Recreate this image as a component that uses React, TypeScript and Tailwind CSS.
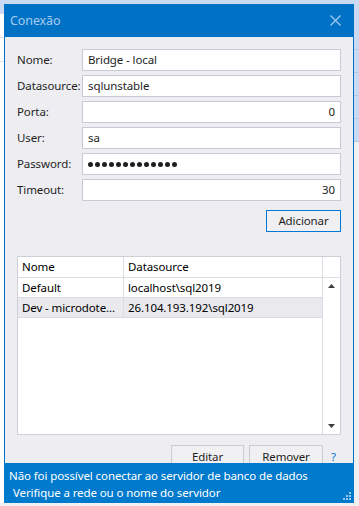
import React from "react";

const fields = [
  { label: "Nome:", value: "Bridge - local" },
  { label: "Datasource:", value: "sqlunstable" },
  { label: "Porta:", value: "0", right: true },
  { label: "User:", value: "sa" },
  { label: "Password:", value: "", password: true },
  { label: "Timeout:", value: "30", right: true },
];

const rows = [
  { nome: "Default", ds: "localhost\\sql2019" },
  { nome: "Dev - microdote...", ds: "26.104.193.192\\sql2019", alt: true },
];

function Field({ label, value, right, password }: { label: string; value: string; right?: boolean; password?: boolean }) {
  return (
    <div className="flex items-center h-[22px] shrink-0">
      <div className="w-[65px] whitespace-nowrap text-[#1e1e1e]">{label}</div>
      <div
        className={`w-[259px] h-[22px] border border-[#cacad6] bg-white flex items-center px-[5px] ${right ? "justify-end" : ""}`}
      >
        {password ? (
          <div className="flex gap-[2px]">
            {Array.from({ length: 13 }).map((_, i) => (
              <span key={i} className="w-[5px] h-[5px] rounded-full bg-[#1e1e1e]" />
            ))}
          </div>
        ) : (
          <span className="text-[#1e1e1e]">{value}</span>
        )}
      </div>
    </div>
  );
}

function Triangle({ up }: { up?: boolean }) {
  return (
    <svg width="7" height="4" viewBox="0 0 7 4">
      <path d={up ? "M0 4 L3.5 0 L7 4 Z" : "M0 0 L3.5 4 L7 0 Z"} fill="#3c3c3c" />
    </svg>
  );
}

export default function App() {
  return (
    <div className="w-[359px] h-[506px] overflow-hidden bg-[#f0f0f0] flex flex-col font-['Noto_Sans',sans-serif] text-[11.5px] tracking-[-0.1px] leading-none">
      <div className="h-[4px] shrink-0 bg-[#c9daf2]" />
      <div className="flex h-[499px] shrink-0">
        {/* app behind, left */}
        <div className="w-[4px] flex flex-col bg-white">
          <div className="h-[10px] bg-[#c9daf2] border-b border-[#d8d8e0]" />
          <div className="h-[24px] border-b border-[#e2e2e8]" />
          <div className="h-[24px] border-b border-[#e2e2e8]" />
          <div className="flex-1" />
        </div>

        {/* window */}
        <div className="w-[350px] flex flex-col">
          <div className="h-[33px] shrink-0 bg-[#0072c6] flex items-center justify-between pl-[6px] pr-[13px]">
            <span className="text-[#a6cbef] text-[12.5px] pt-[2px]">Conexão</span>
            <svg width="11" height="11" viewBox="0 0 11 11">
              <path d="M0.5 0.5 L10.5 10.5 M10.5 0.5 L0.5 10.5" stroke="#a6cbef" strokeWidth="1.2" />
            </svg>
          </div>

          <div className="h-[426px] shrink-0 overflow-hidden bg-[#eeeef2] border-x border-[#0072c6] px-[12px] pt-[12px] flex flex-col">
            <div className="flex flex-col gap-[4px]">
              {fields.map((f) => (
                <Field key={f.label} {...f} />
              ))}
            </div>

            <div className="flex justify-end mt-[9px] shrink-0">
              <button className="w-[75px] h-[22px] border border-[#0078d7] bg-[#f0f0f2] text-[#1e1e1e]">Adicionar</button>
            </div>

            <div className="mt-[24px] h-[179px] shrink-0 border border-[#cfcfd8] bg-white flex">
              <div className="flex-1 flex flex-col">
                <div className="h-[21px] flex border-b border-[#dcdce2]">
                  <div className="w-[106px] border-r border-[#dcdce2] flex items-center pl-[4px]">Nome</div>
                  <div className="flex-1 flex items-center pl-[4px]">Datasource</div>
                </div>
                {rows.map((r) => (
                  <div key={r.nome} className={`h-[20px] flex border-b border-[#dcdce2] ${r.alt ? "bg-[#e9e9ee]" : ""}`}>
                    <div className="w-[106px] border-r border-[#dcdce2] flex items-center pl-[4px] whitespace-nowrap">{r.nome}</div>
                    <div className="flex-1 flex items-center pl-[4px] whitespace-nowrap">{r.ds}</div>
                  </div>
                ))}
              </div>
              <div className="w-[18px] flex flex-col border-l border-[#dcdce2]">
                <div className="h-[21px] border-b border-[#dcdce2]" />
                <div className="h-[16px] flex items-center justify-center">
                  <Triangle up />
                </div>
                <div className="flex-1" />
                <div className="h-[16px] flex items-center justify-center">
                  <Triangle />
                </div>
              </div>
            </div>

            <div className="mt-[10px] h-[18px] shrink-0 flex justify-end items-start">
              <button className="w-[73px] h-[23px] shrink-0 border border-[#cccccc] bg-[#f0f0f2] text-[#1e1e1e]">Editar</button>
              <button className="ml-[5px] w-[74px] h-[23px] shrink-0 border border-[#cccccc] bg-[#f0f0f2] text-[#1e1e1e]">Remover</button>
              <div className="w-[18px] h-[23px] flex items-center pl-[8px] text-[#0078d7]">?</div>
            </div>
          </div>

          <div className="h-[40px] shrink-0 bg-[#007acc] text-white flex flex-col pt-[4px] pl-[5px] leading-[17px] relative">
            <span>Não foi possível conectar ao servidor de banco de dados</span>
            <span className="pl-[4px]">Verifique a rede ou o nome do servidor</span>
            <svg className="absolute right-[3px] bottom-[3px]" width="8" height="8" viewBox="0 0 8 8">
              <rect x="6" y="0" width="2" height="2" fill="#9cc6ec" />
              <rect x="3" y="3" width="2" height="2" fill="#9cc6ec" />
              <rect x="6" y="3" width="2" height="2" fill="#9cc6ec" />
              <rect x="0" y="6" width="2" height="2" fill="#9cc6ec" />
              <rect x="3" y="6" width="2" height="2" fill="#9cc6ec" />
              <rect x="6" y="6" width="2" height="2" fill="#9cc6ec" />
            </svg>
          </div>
        </div>

        {/* app behind, right */}
        <div className="flex-1 flex flex-col bg-[#c9daf2]">
          <div className="h-[46px] border-b border-[#b8c8e0]" />
          <div className="h-[23px] border-b border-[#b8c8e0]" />
          <div className="h-[23px] border-b border-[#b8c8e0]" />
          <div className="h-[23px] border-b border-[#b8c8e0]" />
          <div className="h-[23px] border-b border-[#b8c8e0]" />
          <div className="flex-1 bg-[#f0f0f0]" />
        </div>
      </div>
      <div className="flex-1 bg-[#f0f0f0]" />
    </div>
  );
}
